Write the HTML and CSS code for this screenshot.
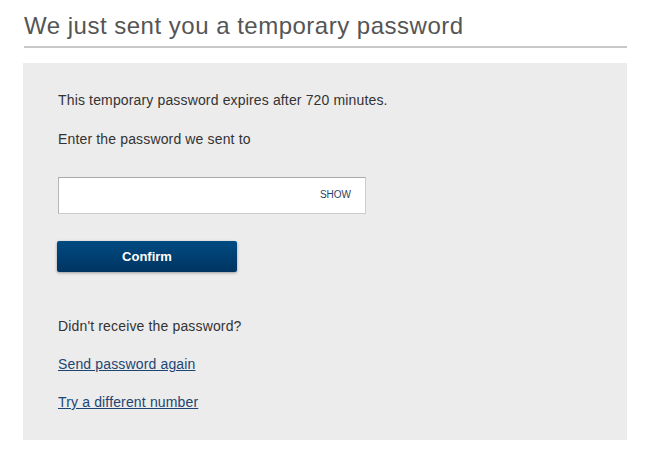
FILE: index.html
```html
<!DOCTYPE html>
<html>
<head>
<meta charset="utf-8">
<link rel="stylesheet" href="styles.css">
</head>
<body>
<div class="page">
  <h1 class="title">We just sent you a temporary password</h1>
  <div class="panel">
    <p class="text first">This temporary password expires after 720 minutes.</p>
    <p class="text">Enter the password we sent to</p>
    <div class="field">
      <input class="input" type="password" aria-label="Password">
      <span class="show">SHOW</span>
    </div>
    <button class="btn" type="button">Confirm</button>
    <p class="text resend">Didn't receive the password?</p>
    <p class="text link-row"><a class="link" href="#">Send password again</a></p>
    <p class="text link-row last"><a class="link" href="#">Try a different number</a></p>
  </div>
</div>
</body>
</html>
```
FILE: styles.css
```css
html, body {
  margin: 0;
  padding: 0;
  background: #ffffff;
  font-family: "Liberation Sans", Arial, sans-serif;
}
.page {
  width: 604px;
  margin-left: 23px;
  padding-top: 12px;
}
.title {
  margin: 0 0 0 1px;
  font-size: 24px;
  line-height: 28px;
  font-weight: normal;
  letter-spacing: 0.5px;
  color: #555555;
  padding-bottom: 6px;
  border-bottom: 2px solid #c8c8c8;
}
.panel {
  margin-top: 15px;
  background: #ececec;
  padding: 27px 35px 28px 35px;
}
.text {
  margin: 0;
  font-size: 14px;
  line-height: 20px;
  letter-spacing: 0.15px;
  color: #333333;
}
.first {
  margin-bottom: 19px;
}
.field {
  position: relative;
  margin-top: 28px;
  width: 308px;
  height: 37px;
}
.input {
  box-sizing: border-box;
  width: 308px;
  height: 37px;
  margin: 0;
  padding: 0 60px 0 10px;
  border: 1px solid #cccccc;
  border-top-color: #a9a9a9;
  border-left-color: #b5b5b5;
  background: #ffffff;
  outline: none;
}
.show {
  position: absolute;
  right: 15px;
  top: 12px;
  font-size: 10px;
  line-height: 12px;
  color: #2d3f63;
}
.btn {
  display: block;
  margin-top: 27px;
  width: 180px;
  height: 31px;
  border: none;
  border-radius: 2px;
  background: linear-gradient(#004b82, #003461);
  box-shadow: 0 1px 3px rgba(0, 0, 0, 0.35);
  color: #ffffff;
  font-family: "Liberation Sans", Arial, sans-serif;
  font-size: 13px;
  font-weight: bold;
  padding: 0;
  margin-left: -1px;
}
.resend {
  margin-top: 44px;
}
.link-row {
  margin-top: 18px;
}
.link {
  color: #1e4572;
  text-decoration: underline;
}
```
